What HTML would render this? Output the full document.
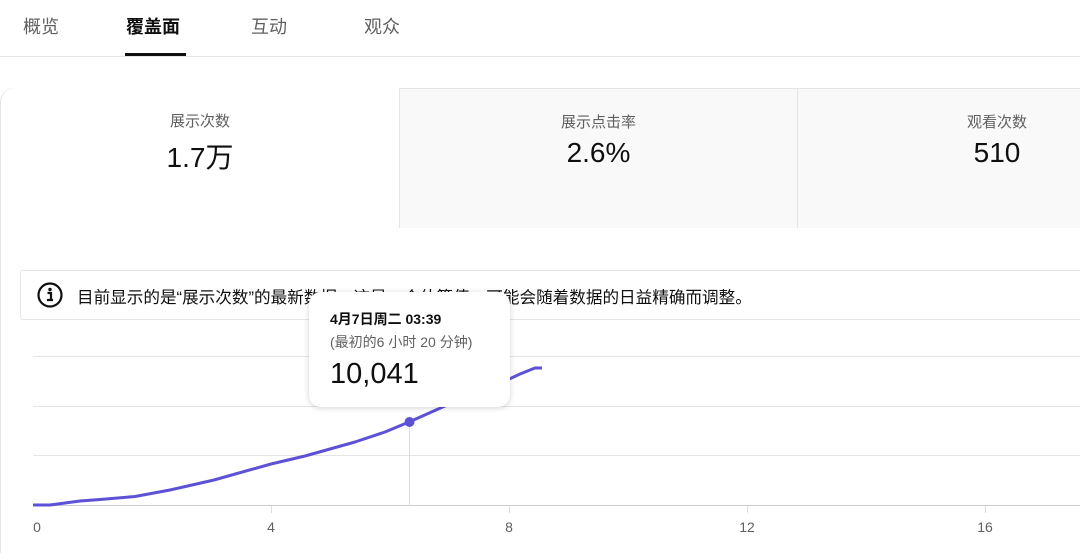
<!DOCTYPE html>
<html style="width:1080px;height:553px;overflow:hidden"><head><meta charset="utf-8"><style>
*{margin:0;padding:0;box-sizing:border-box}
body{width:1080px;height:553px;overflow:hidden;background:#fff;font-family:"Liberation Sans","Noto Sans CJK SC",sans-serif;position:relative;color:#0f0f0f}
.tab{position:absolute;top:13px;font-size:18px;color:#606060}
.abs{position:absolute}
.card{position:absolute;top:88px;height:140px;width:398px;text-align:center;border-top:1px solid #e5e5e5}
.card .l{margin-top:22px;font-size:15px;color:#606060}
.card .v{margin-top:5px;font-size:28px;color:#0f0f0f}
</style></head><body>
<div class="tab" style="left:23px">概览</div>
<div class="tab" style="left:126px;color:#0f0f0f;font-weight:bold">覆盖面</div>
<div class="tab" style="left:251px">互动</div>
<div class="tab" style="left:364px">观众</div>
<div class="abs" style="left:125px;top:53px;width:61px;height:3px;background:#0f0f0f"></div>
<div class="abs" style="left:0;top:56px;width:1080px;height:1px;background:#e5e5e5"></div>

<div class="abs" style="left:0;top:88px;width:1080px;height:465px;border:1px solid #e5e5e5;border-right:none;border-bottom:none;border-radius:14px 0 0 0"></div>
<div class="card" style="left:1px;background:#fff;border-radius:14px 0 0 0;border-top:none"><div class="l">展示次数</div><div class="v">1.7万</div></div>
<div class="card" style="left:399px;background:#f9f9f9;border-left:1px solid #e5e5e5"><div class="l">展示点击率</div><div class="v">2.6%</div></div>
<div class="card" style="left:797px;width:283px;background:#f9f9f9;border-left:1px solid #e5e5e5"><div class="l" style="width:398px">观看次数</div><div class="v" style="width:398px">510</div></div>

<div class="abs" style="left:20px;top:270px;width:1060px;height:50px;border:1px solid #e5e5e5;border-right:none;border-radius:3px 0 0 3px;"></div>
<svg class="abs" style="left:37px;top:282px" width="26" height="26" viewBox="0 0 26 26"><circle cx="13" cy="13" r="11.5" fill="none" stroke="#0f0f0f" stroke-width="2.2"/><circle cx="13" cy="7.5" r="1.7" fill="#0f0f0f"/><path d="M10.5 11h3.5v7h2M10 18h6" stroke="#0f0f0f" stroke-width="2.2" fill="none"/></svg>
<div class="abs" style="left:77px;top:284px;font-size:16.6px;color:#0f0f0f;white-space:nowrap">目前显示的是“展示次数”的最新数据。这是一个估算值，可能会随着数据的日益精确而调整。</div>

<svg class="abs" style="left:0;top:330px" width="1080" height="223" viewBox="0 330 1080 223">
<g stroke="#e5e5e5" stroke-width="1"><line x1="33" y1="356.5" x2="1080" y2="356.5"/><line x1="33" y1="406.5" x2="1080" y2="406.5"/><line x1="33" y1="455.5" x2="1080" y2="455.5"/></g>
<line x1="33" y1="505.5" x2="1080" y2="505.5" stroke="#ccc"/>
<g stroke="#ddd"><line x1="271.5" y1="506" x2="271.5" y2="513"/><line x1="509.5" y1="506" x2="509.5" y2="513"/><line x1="747.5" y1="506" x2="747.5" y2="513"/><line x1="985.5" y1="506" x2="985.5" y2="513"/></g>
<line x1="409.5" y1="420" x2="409.5" y2="506" stroke="#ddd"/>
<polyline fill="none" stroke="#5d52d6" stroke-width="3" stroke-linejoin="round" points="33,505 50,505 80,501 100,499.5 135,496.5 170,490 214,480 271,464 305,456 355,442 385,432 409,422 445,406 490,388 520,374 535,368 542,368"/>
<circle cx="409.5" cy="422" r="5" fill="#5d52d6"/>
<g font-family="Liberation Sans" font-size="14" fill="#606060" text-anchor="middle"><text x="37" y="532">0</text><text x="271" y="532">4</text><text x="509" y="532">8</text><text x="747" y="532">12</text><text x="985" y="532">16</text></g>
</svg>

<div class="abs" style="left:309px;top:292px;width:201px;height:115px;background:#fff;border-radius:12px;box-shadow:0 1px 6px rgba(0,0,0,.18)">
<div style="position:absolute;left:21px;top:17px;font-size:14px;font-weight:bold;color:#0f0f0f;white-space:nowrap">4月7日周二 03:39</div>
<div style="position:absolute;left:21px;top:40px;font-size:14px;color:#606060;white-space:nowrap">(最初的6 小时 20 分钟)</div>
<div style="position:absolute;left:21px;top:66px;font-size:29px;color:#0f0f0f">10,041</div>
</div>
</body></html>
